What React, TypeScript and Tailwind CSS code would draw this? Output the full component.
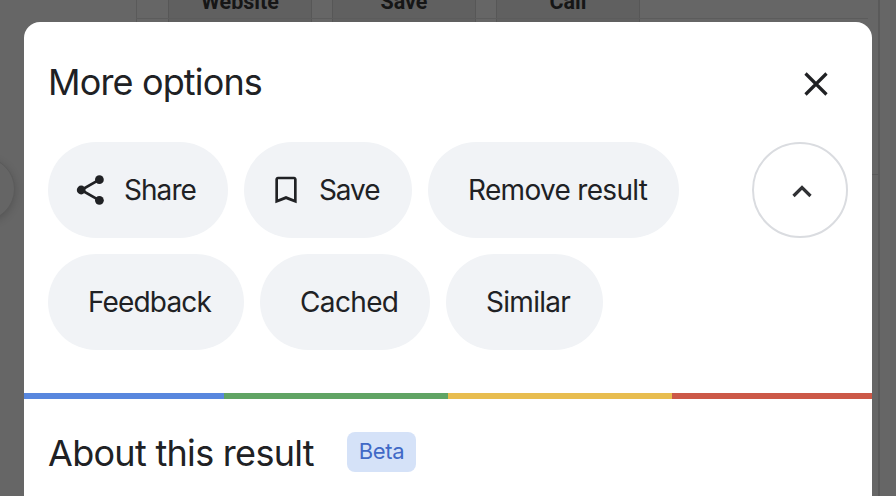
import {ReactNode} from "react";

interface Option {
  label: string,
  className: string,
  textClass: string,
  icon?: ReactNode
}

const ShareIcon = () => (
  <svg className="h-8 w-8 shrink-0" viewBox="0 0 32 32" fill="none" stroke="currentColor" strokeWidth={2.7} aria-hidden="true">
    <path d="M23.4 5.6L5.2 16L23.4 26.4" />
    <circle cx="23.4" cy="5.7" r="4.4" fill="currentColor" stroke="none" />
    <circle cx="5.2" cy="16" r="4.4" fill="currentColor" stroke="none" />
    <circle cx="23.4" cy="26.3" r="4.4" fill="currentColor" stroke="none" />
  </svg>
)

const BookmarkIcon = () => (
  <svg className="h-8 w-8 shrink-0" viewBox="0 0 24 24" fill="currentColor" aria-hidden="true">
    <path d="M18 2H6C4.9 2 4 2.9 4 4v18l8-3.1L20 22V4c0-1.1-.9-2-2-2zm0 16.9l-6-2.4-6 2.4V4h12z" />
  </svg>
)

const rows: Array<Array<Option>> = [
  [
    {label: "Share", className: "w-[180px] pl-7", textClass: "ml-4 tracking-[-0.95px]", icon: <ShareIcon/>},
    {label: "Save", className: "w-[168px] pl-[26px]", textClass: "ml-[17px] tracking-[-1.1px]", icon: <BookmarkIcon/>},
    {label: "Remove result", className: "w-[251px] pl-10", textClass: "tracking-[-0.68px]"},
  ],
  [
    {label: "Feedback", className: "w-[196px] pl-10", textClass: "tracking-[-0.85px]"},
    {label: "Cached", className: "w-[170px] pl-10", textClass: "tracking-[-0.65px]"},
    {label: "Similar", className: "w-[157px] pl-10", textClass: "tracking-[-0.7px]"},
  ],
]

const actions = ["Website", "Save", "Call"]

// dimmed page behind the sheet
const Backdrop = () => (
  <div className="absolute inset-0 overflow-hidden bg-[#666666]" aria-hidden="true">
    <div className="absolute left-[136px] top-0 h-6 w-px bg-[#5a5a5a]"/>
    <div className="absolute left-[168px] top-0 flex gap-5">
      {actions.map((i) => (
        <div key={i} className="h-6 w-36 border-x border-[#575757] bg-[#606060] text-center">
          <span className="-mt-[10px] block font-[Roboto] text-[21.5px] font-bold leading-6 text-[#161616]">{i}</span>
        </div>
      ))}
    </div>
    <div className="absolute left-[136px] top-[18px] h-px w-[732px] bg-[#5c5c5c]"/>
    <div className="absolute left-[878px] top-0 h-full w-[2px] bg-[#5a5a5a]"/>
    <div className="absolute left-[872px] top-[174px] h-px w-[6px] bg-[#5a5a5a]"/>
    <div className="absolute -left-[49px] top-[157px] h-16 w-16 rounded-full border border-[#5b5b5b] bg-[#656565] shadow-[0_2px_8px_rgba(0,0,0,0.18)]"/>
  </div>
)

export default function App() {
  return (
    <div className="relative h-[496px] w-[896px] overflow-hidden font-[Inter,sans-serif] text-[#202124]">
      <Backdrop/>
      <div className="relative mx-6 mt-[22px] h-[474px] rounded-t-2xl bg-white">
        <div className="flex h-[120px] items-center justify-between pl-6 pr-[43px]">
          <h1 className="text-[36px] leading-10 tracking-[-0.85px]">More options</h1>
          <button type="button" aria-label="Close">
            <svg className="mt-1 h-[26px] w-[26px]" viewBox="0 0 26 26" fill="none" stroke="currentColor" strokeWidth={3.2} aria-hidden="true">
              <path d="M2.5 2.5L23.5 23.5M23.5 2.5L2.5 23.5" />
            </svg>
          </button>
        </div>
        <div className="flex items-start justify-between px-6">
          <div className="space-y-4">
            {rows.map((row, rowIdx) => (
              <div key={rowIdx} className="flex gap-4">
                {row.map((item) => (
                  <button
                    key={item.label}
                    type="button"
                    className={`flex h-24 items-center whitespace-nowrap rounded-full bg-[#f1f3f6] text-[28px] ${item.className}`}
                  >
                    {item.icon}
                    <span className={`pb-px ${item.textClass}`}>{item.label}</span>
                  </button>
                ))}
              </div>
            ))}
          </div>
          <button
            type="button"
            aria-label="Show less"
            className="flex h-24 w-24 items-center justify-center rounded-full border-2 border-[#dadce0]"
          >
            <svg className="ml-1 mt-[3px] h-5 w-5" viewBox="0 0 20 20" fill="none" stroke="#303134" strokeWidth={3.2} aria-hidden="true">
              <path d="M1.5 14L10 5.5L18.5 14" />
            </svg>
          </button>
        </div>
        <div className="mt-[43px] flex h-[6px]">
          <div className="w-[200px] bg-[#5887de]"/>
          <div className="w-[224px] bg-[#60a464]"/>
          <div className="w-[224px] bg-[#e8bd4f]"/>
          <div className="w-[200px] bg-[#cc5847]"/>
        </div>
        <div className="flex items-start pl-6 pt-[33px]">
          <h2 className="mt-px w-[299px] whitespace-nowrap text-[36px] leading-10 tracking-[-0.7px]">About this result</h2>
          <span className="flex h-10 w-[69px] items-center justify-center rounded-lg bg-[#d5e2f8] pb-0.5 text-[22px] tracking-[-0.4px] text-[#4069c6]">Beta</span>
        </div>
      </div>
    </div>
  )
}
